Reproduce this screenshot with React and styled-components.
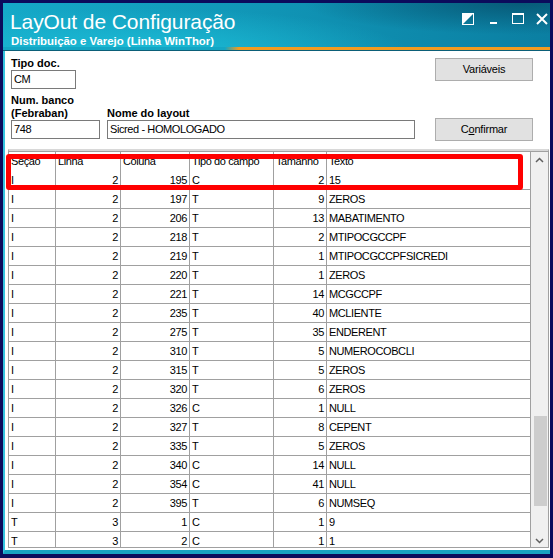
import React from 'react';
import styled, { createGlobalStyle } from 'styled-components';

const GlobalStyle = createGlobalStyle`
  html, body {
    margin: 0;
    padding: 0;
    overflow: hidden;
    background: #0b0b5c;
  }
`;

const Window = styled.div`
  width: 553px;
  height: 558px;
  box-sizing: border-box;
  padding: 3px 3px 4px 3px;
  background: #0b0b5c;
  display: flex;
  flex-direction: column;
  font-family: 'Liberation Sans', Arial, sans-serif;
`;

const TitleBar = styled.div`
  position: relative;
  height: 44px;
  flex: none;
  box-sizing: border-box;
  padding: 7px 0 0 7px;
  background:
    radial-gradient(ellipse 70% 140% at 25% 110%, #1cbcd6 0%, rgba(28, 188, 214, 0) 70%),
    radial-gradient(ellipse 50% 90% at 95% 0%, #075a78 0%, rgba(7, 90, 120, 0) 80%),
    linear-gradient(to right, #15a9c8, #0b7fa2);
  display: flex;
  flex-direction: column;
  color: #fff;
`;

const OrangeStripe = styled.div`
  height: 3px;
  flex: none;
  background: linear-gradient(to right, #14a6c4 0, #14a6c4 222px, #f29b1f 236px, #f29b1f 100%);
  border-bottom: 1px solid #0b5f78;
`;

const Title = styled.div`
  font-size: 21px;
  line-height: 24px;
  letter-spacing: -0.1px;
`;

const Subtitle = styled.div`
  font-size: 11.4px;
  font-weight: bold;
  line-height: 13px;
  margin-top: 1px;
  margin-left: 1px;
`;

const Controls = styled.div`
  position: absolute;
  top: 10px;
  right: 2px;
  display: flex;
  align-items: center;
  gap: 12px;
`;

const Body = styled.div`
  flex: 1;
  background: #fff;
  border-left: 2px solid #35c3e0;
  border-bottom: 4px solid #17a2c1;
  display: flex;
  flex-direction: column;
  min-height: 0;
`;

const TopPanel = styled.div`
  display: flex;
  justify-content: space-between;
  height: 96px;
  flex: none;
  box-sizing: border-box;
  padding: 6px 17px 0 6px;
`;

const Form = styled.div`
  display: flex;
  flex-direction: column;
`;

const FieldRow = styled.div`
  display: flex;
  align-items: flex-end;
  gap: 7px;
  margin-top: ${p => p.$gap || 0}px;
`;

const Field = styled.div`
  display: flex;
  flex-direction: column;
`;

const Label = styled.div`
  font-size: 11px;
  font-weight: bold;
  line-height: 13px;
  color: #000;
`;

const Input = styled.div`
  width: ${p => p.$w}px;
  height: 19px;
  box-sizing: border-box;
  border: 1px solid #7a7a7a;
  font-size: 11px;
  line-height: 17px;
  letter-spacing: -0.4px;
  padding-left: 2px;
  color: #000;
  background: #fff;
`;

const Buttons = styled.div`
  display: flex;
  flex-direction: column;
  padding-top: 1px;
  gap: 37px;
`;

const Button = styled.div`
  width: 98px;
  height: 23px;
  box-sizing: border-box;
  border: 1px solid #adadad;
  background: #e1e1e1;
  font-size: 11px;
  line-height: 21px;
  letter-spacing: -0.2px;
  text-align: center;
  color: #000;

  u {
    text-decoration: underline;
  }
`;

const GridFrame = styled.div`
  position: relative;
  margin: 2px 1px 2px 3px;
  flex: 1;
  border: 1px solid #a0a0a0;
  border-top: 2px solid #d8d8d8;
  display: flex;
  min-height: 0;
`;

const Table = styled.div`
  flex: 1;
  overflow: hidden;
  border-top: 1px solid #a0a0a0;
`;

const Row = styled.div`
  display: grid;
  grid-template-columns: 47px 65px 69px 84px 53px 204px;
  height: 19px;
`;

const Cell = styled.div`
  box-sizing: border-box;
  border-right: 1px solid #a0a0a0;
  border-bottom: ${p => (p.$head ? 'none' : '1px solid #a0a0a0')};
  font-size: 11px;
  line-height: 18px;
  letter-spacing: -0.4px;
  padding: 0 2px;
  color: #000;
  white-space: nowrap;
  overflow: hidden;
  text-align: ${p => (p.$right ? 'right' : 'left')};
`;

const Scrollbar = styled.div`
  width: 17px;
  flex: none;
  background: #f0f0f0;
  border-top: 1px solid #a0a0a0;
  position: relative;
  display: flex;
  flex-direction: column;
  align-items: center;
  justify-content: space-between;
  padding: 5px 0 3px;
  box-sizing: border-box;
`;

const Thumb = styled.div`
  position: absolute;
  left: 3px;
  right: 1px;
  top: 264px;
  height: 90px;
  background: #cdcdcd;
`;

const Highlight = styled.div`
  position: absolute;
  left: -3px;
  top: 3px;
  width: 517px;
  height: 36px;
  box-sizing: border-box;
  border: 5px solid #ff0000;
  border-radius: 3px;
  pointer-events: none;
`;

const columns = [
  { name: 'Seçao' },
  { name: 'Linha', right: true },
  { name: 'Coluna', right: true },
  { name: 'Tipo do campo' },
  { name: 'Tamanho', right: true },
  { name: 'Texto' },
];

const rows = [
  ['I', 2, 195, 'C', 2, '15'],
  ['I', 2, 197, 'T', 9, 'ZEROS'],
  ['I', 2, 206, 'T', 13, 'MABATIMENTO'],
  ['I', 2, 218, 'T', 2, 'MTIPOCGCCPF'],
  ['I', 2, 219, 'T', 1, 'MTIPOCGCCPFSICREDI'],
  ['I', 2, 220, 'T', 1, 'ZEROS'],
  ['I', 2, 221, 'T', 14, 'MCGCCPF'],
  ['I', 2, 235, 'T', 40, 'MCLIENTE'],
  ['I', 2, 275, 'T', 35, 'ENDERENT'],
  ['I', 2, 310, 'T', 5, 'NUMEROCOBCLI'],
  ['I', 2, 315, 'T', 5, 'ZEROS'],
  ['I', 2, 320, 'T', 6, 'ZEROS'],
  ['I', 2, 326, 'C', 1, 'NULL'],
  ['I', 2, 327, 'T', 8, 'CEPENT'],
  ['I', 2, 335, 'T', 5, 'ZEROS'],
  ['I', 2, 340, 'C', 14, 'NULL'],
  ['I', 2, 354, 'C', 41, 'NULL'],
  ['I', 2, 395, 'T', 6, 'NUMSEQ'],
  ['T', 3, 1, 'C', 1, '9'],
  ['T', 3, 2, 'C', 1, '1'],
];

const Chevron = ({ up }) => (
  <svg width="9" height="6" viewBox="0 0 9 6">
    <path
      d={up ? 'M1 5 L4.5 1.5 L8 5' : 'M1 1 L4.5 4.5 L8 1'}
      fill="none"
      stroke="#606060"
      strokeWidth="1.5"
    />
  </svg>
);

const WindowControls = () => (
  <Controls>
    <svg width="12" height="12" viewBox="0 0 12 12">
      <rect x="0.5" y="0.5" width="11" height="11" fill="none" stroke="#fff" />
      <path d="M0 0 H12 L0 12 Z" fill="#fff" />
    </svg>
    <svg width="14" height="12" viewBox="0 0 14 12">
      <rect x="4" y="9" width="7" height="2" fill="#fff" />
    </svg>
    <svg width="12" height="12" viewBox="0 0 12 12">
      <rect x="0.5" y="0.5" width="11" height="10" fill="none" stroke="#fff" />
      <rect x="0" y="0" width="12" height="2" fill="#fff" />
    </svg>
    <svg width="12" height="12" viewBox="0 0 12 12">
      <path d="M1 1 L11 11 M11 1 L1 11" stroke="#fff" strokeWidth="2" />
    </svg>
  </Controls>
);

export default function App() {
  return (
    <>
      <GlobalStyle />
      <Window>
        <TitleBar>
          <Title>LayOut de Configuração</Title>
          <Subtitle>Distribuição e Varejo (Linha WinThor)</Subtitle>
          <WindowControls />
        </TitleBar>
        <OrangeStripe />
        <Body>
          <TopPanel>
            <Form>
              <Field>
                <Label>Tipo doc.</Label>
                <Input $w={65}>CM</Input>
              </Field>
              <FieldRow $gap={5}>
                <Field>
                  <Label>Num. banco</Label>
                  <Label>(Febraban)</Label>
                  <Input $w={89}>748</Input>
                </Field>
                <Field>
                  <Label>Nome do layout</Label>
                  <Input $w={308}>Sicred - HOMOLOGADO</Input>
                </Field>
              </FieldRow>
            </Form>
            <Buttons>
              <Button>Variáveis</Button>
              <Button>
                C<u>o</u>nfirmar
              </Button>
            </Buttons>
          </TopPanel>
          <GridFrame>
            <Table>
              <Row>
                {columns.map(c => (
                  <Cell key={c.name} $head>
                    {c.name}
                  </Cell>
                ))}
              </Row>
              {rows.map((r, i) => (
                <Row key={i}>
                  {r.map((v, j) => (
                    <Cell key={j} $right={columns[j].right}>
                      {v}
                    </Cell>
                  ))}
                </Row>
              ))}
            </Table>
            <Scrollbar>
              <Chevron up />
              <Thumb />
              <Chevron />
            </Scrollbar>
            <Highlight />
          </GridFrame>
        </Body>
      </Window>
    </>
  );
}
